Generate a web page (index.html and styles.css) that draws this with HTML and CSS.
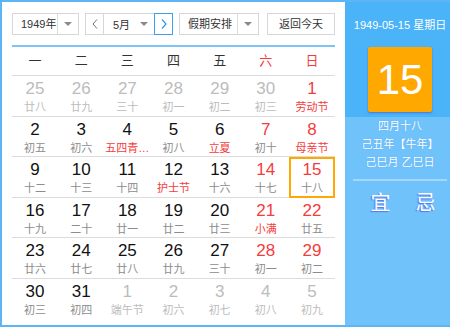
FILE: index.html
```html
<!DOCTYPE html>
<html lang="zh-CN">
<head>
  <meta charset="UTF-8" />
  <title>万年历</title>
  <link rel="stylesheet" href="styles.css">
</head>
<body>
  <div class="calendar">
    <div class="main">
      <!-- 顶部选择栏 -->
      <div class="toolbar">
        <div class="sel sel-year">
          <span class="sel-text">1949年</span>
          <span class="sel-arrow"><i class="tri"></i></span>
        </div>
        <div class="month-group">
          <span class="nav-btn">
            <svg width="6" height="10" viewBox="0 0 6 10"><polyline points="5,0.5 1,5 5,9.5" fill="none" stroke="#777" stroke-width="1"/></svg>
          </span>
          <span class="month-mid">
            <span class="month-text">5月</span>
            <i class="tri"></i>
          </span>
          <span class="nav-btn nav-next">
            <svg width="6" height="10" viewBox="0 0 6 10"><polyline points="1,0.5 5,5 1,9.5" fill="none" stroke="#2e97ee" stroke-width="1.2"/></svg>
          </span>
        </div>
        <div class="sel sel-holiday">
          <span class="sel-text">假期安排</span>
          <span class="sel-arrow"><i class="tri"></i></span>
        </div>
        <div class="today-btn">返回今天</div>
      </div>

      <div class="week">
        <span>一</span><span>二</span><span>三</span><span>四</span><span>五</span><span class="red">六</span><span class="red">日</span>
      </div>

      <div class="days">
        <div class="row">
          <div class="day other"><b>25</b><small>廿八</small></div>
          <div class="day other"><b>26</b><small>廿九</small></div>
          <div class="day other"><b>27</b><small>三十</small></div>
          <div class="day other"><b>28</b><small>初一</small></div>
          <div class="day other"><b>29</b><small>初二</small></div>
          <div class="day other"><b>30</b><small>初三</small></div>
          <div class="day weekend"><b>1</b><small class="fest">劳动节</small></div>
        </div>
        <div class="row">
          <div class="day"><b>2</b><small>初五</small></div>
          <div class="day"><b>3</b><small>初六</small></div>
          <div class="day"><b>4</b><small class="fest" title="五四青年节">五四青…</small></div>
          <div class="day"><b>5</b><small>初八</small></div>
          <div class="day"><b>6</b><small class="fest">立夏</small></div>
          <div class="day weekend"><b>7</b><small>初十</small></div>
          <div class="day weekend"><b>8</b><small class="fest">母亲节</small></div>
        </div>
        <div class="row">
          <div class="day"><b>9</b><small>十二</small></div>
          <div class="day"><b>10</b><small>十三</small></div>
          <div class="day"><b>11</b><small>十四</small></div>
          <div class="day"><b>12</b><small class="fest">护士节</small></div>
          <div class="day"><b>13</b><small>十六</small></div>
          <div class="day weekend"><b>14</b><small>十七</small></div>
          <div class="day weekend current"><b>15</b><small>十八</small></div>
        </div>
        <div class="row">
          <div class="day"><b>16</b><small>十九</small></div>
          <div class="day"><b>17</b><small>二十</small></div>
          <div class="day"><b>18</b><small>廿一</small></div>
          <div class="day"><b>19</b><small>廿二</small></div>
          <div class="day"><b>20</b><small>廿三</small></div>
          <div class="day weekend"><b>21</b><small class="fest">小满</small></div>
          <div class="day weekend"><b>22</b><small>廿五</small></div>
        </div>
        <div class="row">
          <div class="day"><b>23</b><small>廿六</small></div>
          <div class="day"><b>24</b><small>廿七</small></div>
          <div class="day"><b>25</b><small>廿八</small></div>
          <div class="day"><b>26</b><small>廿九</small></div>
          <div class="day"><b>27</b><small>三十</small></div>
          <div class="day weekend"><b>28</b><small>初一</small></div>
          <div class="day weekend"><b>29</b><small>初二</small></div>
        </div>
        <div class="row last">
          <div class="day"><b>30</b><small>初三</small></div>
          <div class="day"><b>31</b><small>初四</small></div>
          <div class="day other"><b>1</b><small>端午节</small></div>
          <div class="day other"><b>2</b><small>初六</small></div>
          <div class="day other"><b>3</b><small>初七</small></div>
          <div class="day other"><b>4</b><small>初八</small></div>
          <div class="day other"><b>5</b><small>初九</small></div>
        </div>
      </div>
    </div>

    <!-- 右侧详情 -->
    <div class="side">
      <div class="side-top">
        <div class="side-date">1949-05-15 星期日</div>
        <div class="big-day">15</div>
      </div>
      <div class="side-bottom">
        <div class="lunar">四月十八</div>
        <div class="lunar">己丑年【牛年】</div>
        <div class="lunar">己巳月 乙巳日</div>
        <div class="side-line"></div>
        <div class="yiji"><span>宜</span><span>忌</span></div>
      </div>
    </div>
  </div>
</body>
</html>
```

FILE: styles.css
```css
body {
  margin: 0;
  font-family: 'Liberation Sans', 'Noto Sans CJK SC', sans-serif;
  background: #fff;
}
.calendar {
  display: flex;
  width: 450px;
  height: 327px;
  box-sizing: border-box;
  border: 2px solid #5cb6f6;
  border-right: none;
}
.main {
  width: 343px;
  padding: 0 10px;
  box-sizing: border-box;
}

/* toolbar */
.toolbar {
  display: flex;
  margin-top: 11px;
  height: 22px;
  font-size: 11px;
  color: #333;
}
.sel {
  display: flex;
  height: 22px;
  box-sizing: border-box;
  border: 1px solid #d6d6d6;
}
.sel-year { width: 67px; }
.sel-holiday { width: 80px; margin-left: 6px; }
.sel-text {
  flex: 1;
  padding-left: 8px;
  line-height: 20px;
  white-space: nowrap;
}
.sel-arrow {
  width: 20px;
  flex-shrink: 0;
  border-left: 1px solid #dcdcdc;
  display: flex;
  align-items: center;
  justify-content: center;
}
.tri {
  width: 0;
  height: 0;
  border-left: 4px solid transparent;
  border-right: 4px solid transparent;
  border-top: 4px solid #8a8a8a;
}
.month-group {
  display: flex;
  margin-left: 6px;
  height: 22px;
}
.nav-btn {
  width: 19px;
  height: 22px;
  box-sizing: border-box;
  border: 1px solid #d6d6d6;
  display: flex;
  align-items: center;
  justify-content: center;
}
.nav-next { border-color: #3a9ff0; }
.month-mid {
  width: 50px;
  height: 22px;
  box-sizing: border-box;
  border-top: 1px solid #d6d6d6;
  border-bottom: 1px solid #d6d6d6;
  display: flex;
  align-items: center;
}
.month-text {
  padding-left: 9px;
  width: 27px;
  white-space: nowrap;
}
.today-btn {
  width: 68px;
  margin-left: 8px;
  height: 22px;
  box-sizing: border-box;
  border: 1px solid #d6d6d6;
  text-align: center;
  line-height: 20px;
}

/* week header */
.week {
  display: grid;
  grid-template-columns: repeat(7, 1fr);
  margin-top: 10px;
  border-top: 2px solid #7cc3f6;
  border-bottom: 1px solid #dcdcdc;
  height: 28px;
  line-height: 28px;
  text-align: center;
  font-size: 13px;
  color: #333;
}
.red { color: #f53c3c; }

/* days */
.row {
  display: grid;
  grid-template-columns: repeat(7, 1fr);
  height: 40.5px;
  box-sizing: border-box;
  border-bottom: 1px solid #dcdcdc;
}
.row.last { border-bottom: none; }
.day {
  text-align: center;
  padding-top: 3px;
  box-sizing: border-box;
}
.day b {
  display: block;
  font-weight: normal;
  font-size: 17px;
  line-height: 20px;
  color: #111;
}
.day small {
  display: block;
  font-size: 11px;
  line-height: 16px;
  color: #8c8c8c;
  white-space: nowrap;
}
.day.weekend b { color: #f53c3c; }
.day small.fest { color: #f53c3c; }
.day.other b, .day.other small { color: #bcbcbc; }
.day.current {
  border: 2px solid #ffa800;
  padding-top: 1px;
}

/* side panel */
.side {
  width: 105px;
  display: flex;
  flex-direction: column;
  color: #fff;
  text-align: center;
}
.side-top {
  background: #4bb3f7;
  height: 115px;
  padding: 15px 3px 0 8px;
  box-sizing: border-box;
}
.side-date {
  font-size: 11px;
  line-height: 16px;
  white-space: nowrap;
}
.big-day {
  width: 64px;
  height: 65px;
  margin: 14px auto 0;
  background: #ffa800;
  border-radius: 2px;
  box-shadow: 0 1px 2px rgba(80, 70, 190, 0.6);
  font-size: 42px;
  line-height: 65px;
}
.side-bottom {
  flex: 1;
  background: #6fc3fa;
  padding: 0 3px 0 8px;
}
.lunar {
  font-size: 11px;
  line-height: 18px;
  white-space: nowrap;
  text-shadow: 0 0 1px rgba(70, 110, 230, 0.5);
}
.side-line {
  height: 2px;
  background: #a4d7fb;
  margin: 8px 0 0 0;
}
.yiji {
  display: flex;
  justify-content: center;
  gap: 25px;
  margin-top: 8px;
  padding-left: 6px;
  font-size: 20px;
  line-height: 28px;
  text-shadow: -1px 1px 1px #5a72ee;
}
```
